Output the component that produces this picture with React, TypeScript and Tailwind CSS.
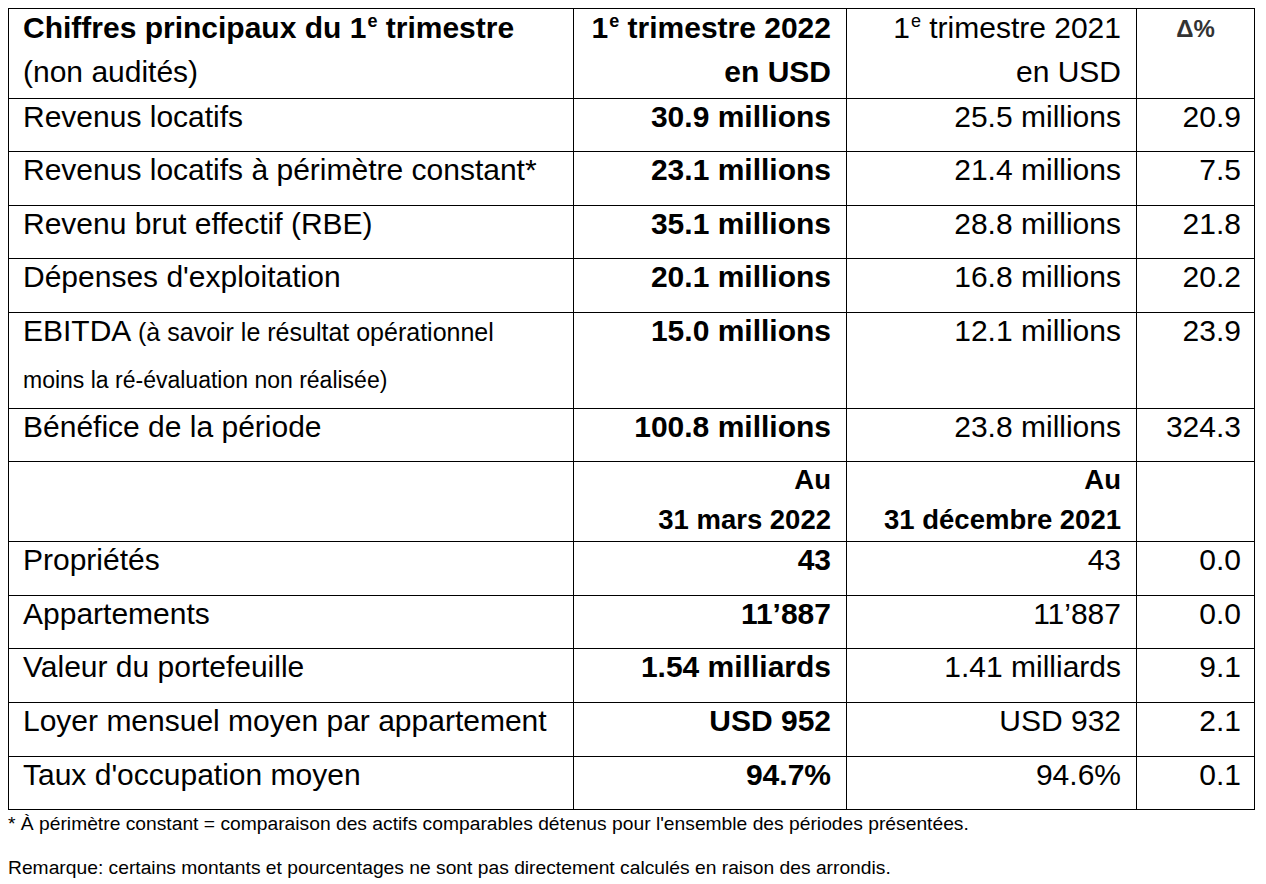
import React from "react";

type Row = {
  label: React.ReactNode;
  cur: React.ReactNode;
  prev: React.ReactNode;
  delta?: string;
  h: string;
};

const rows: Row[] = [
  { label: "Revenus locatifs", cur: "30.9 millions", prev: "25.5 millions", delta: "20.9", h: "h-[53px]" },
  { label: "Revenus locatifs à périmètre constant*", cur: "23.1 millions", prev: "21.4 millions", delta: "7.5", h: "h-[54px]" },
  { label: "Revenu brut effectif (RBE)", cur: "35.1 millions", prev: "28.8 millions", delta: "21.8", h: "h-[53px]" },
  { label: "Dépenses d'exploitation", cur: "20.1 millions", prev: "16.8 millions", delta: "20.2", h: "h-[54px]" },
  {
    label: (
      <>
        <div className="leading-[36px]">
          EBITDA <span className="text-[25px]">(à savoir le résultat opérationnel</span>
        </div>
        <div className="mt-[10px] text-[23px] leading-[40px]">moins la ré-évaluation non réalisée)</div>
      </>
    ),
    cur: "15.0 millions",
    prev: "12.1 millions",
    delta: "23.9",
    h: "h-[96px]",
  },
  { label: "Bénéfice de la période", cur: "100.8 millions", prev: "23.8 millions", delta: "324.3", h: "h-[53px]" },
];

const rows2: Row[] = [
  { label: "Propriétés", cur: "43", prev: "43", delta: "0.0", h: "h-[54px]" },
  { label: "Appartements", cur: "11’887", prev: "11’887", delta: "0.0", h: "h-[53px]" },
  { label: "Valeur du portefeuille", cur: "1.54 milliards", prev: "1.41 milliards", delta: "9.1", h: "h-[54px]" },
  { label: "Loyer mensuel moyen par appartement", cur: "USD 952", prev: "USD 932", delta: "2.1", h: "h-[54px]" },
  { label: "Taux d'occupation moyen", cur: "94.7%", prev: "94.6%", delta: "0.1", h: "h-[53px]" },
];

const c1 = "w-[565px] shrink-0 border-r border-black pl-[14px]";
const c2 = "w-[273px] shrink-0 border-r border-black pr-[15px] text-right";
const c3 = "w-[290px] shrink-0 border-r border-black pr-[15px] text-right";
const c4 = "w-[118px] shrink-0 border-r border-black pr-[13px] text-right";

function DataRow({ r }: { r: Row }) {
  return (
    <div className={`flex border-b border-black ${r.h}`}>
      <div className={c1}>
        {typeof r.label === "string" ? <div className="leading-[36px]">{r.label}</div> : r.label}
      </div>
      <div className={`${c2} font-bold leading-[36px]`}>{r.cur}</div>
      <div className={`${c3} leading-[36px]`}>{r.prev}</div>
      <div className={`${c4} leading-[36px]`}>{r.delta}</div>
    </div>
  );
}

// ordinal superscript, e.g. 1e
const Sup = () => <span className="relative -top-[11px] ml-[1px] text-[18px] leading-none">e</span>;

export default function App() {
  return (
    <div className="min-h-[884px] w-[1266px] bg-white pl-[8px] pt-[8px] text-black [font-family:'Liberation_Sans',Arial,sans-serif]">
      <div className="w-[1247px] border-l border-t border-black text-[30px]">
        {/* header */}
        <div className="flex h-[90px] border-b border-black">
          <div className={`${c1} font-bold`}>
            <div className="-mt-[3px] leading-[44px]">
              Chiffres principaux du 1<Sup /> trimestre
            </div>
            <div className="font-normal leading-[44px]">(non audités)</div>
          </div>
          <div className={`${c2} font-bold`}>
            <div className="-mt-[3px] leading-[44px]">
              1<Sup /> trimestre 2022
            </div>
            <div className="leading-[44px]">en USD</div>
          </div>
          <div className={c3}>
            <div className="-mt-[3px] leading-[44px]">
              1<Sup /> trimestre 2021
            </div>
            <div className="leading-[44px]">en USD</div>
          </div>
          <div className="w-[118px] shrink-0 border-r border-black pt-[5px] text-center text-[24px] font-bold leading-[30px] text-[#333]">
            Δ%
          </div>
        </div>

        {rows.map((r, i) => (
          <DataRow key={i} r={r} />
        ))}

        {/* balance date header */}
        <div className="flex h-[80px] border-b border-black text-[27.5px]">
          <div className={c1} />
          <div className={`${c2} font-bold`}>
            <div className="-mt-[2px] leading-[40px]">Au</div>
            <div className="leading-[40px]">31 mars 2022</div>
          </div>
          <div className={`${c3} font-bold`}>
            <div className="-mt-[2px] leading-[40px]">Au</div>
            <div className="leading-[40px]">31 décembre 2021</div>
          </div>
          <div className={c4} />
        </div>

        {rows2.map((r, i) => (
          <DataRow key={i} r={r} />
        ))}
      </div>

      <div className="mt-[2px] text-[19.25px] leading-[24px]">
        * À périmètre constant = comparaison des actifs comparables détenus pour l'ensemble des périodes présentées.
      </div>
      <div className="mt-[20px] text-[19.25px] leading-[24px]">
        Remarque: certains montants et pourcentages ne sont pas directement calculés en raison des arrondis.
      </div>
    </div>
  );
}
